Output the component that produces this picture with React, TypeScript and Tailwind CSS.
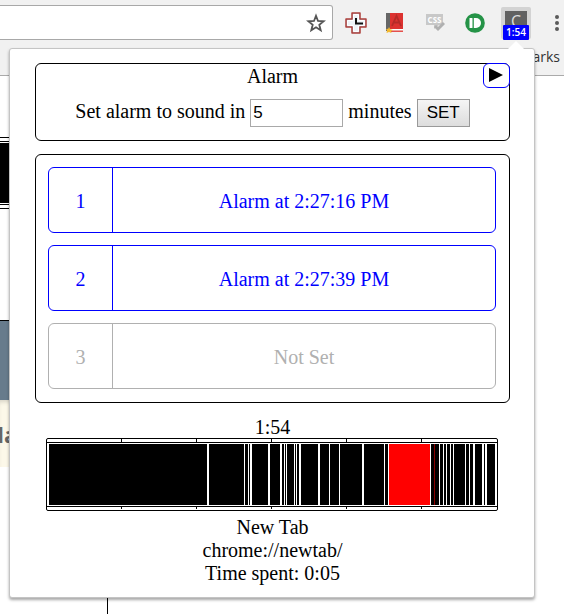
import React from "react";

type Segment = { kind: "black" | "red" | "dark" | "gap"; width: number };

const bars: [number, number, ("red" | "dark")?][] = [
  [49, 207], [209, 244], [245, 248], [249, 250], [252, 268], [270, 280], [282, 284], [285, 286],
  [287, 294], [295, 296], [297, 299], [301, 318], [320, 329], [330, 339], [340, 362], [364, 384],
  [385, 388], [389, 430, "red"], [431, 434], [434, 435, "dark"], [435, 439], [440, 443], [444, 446],
  [447, 450], [451, 453], [454, 465], [466, 469], [470, 473], [475, 482], [484, 485], [487, 495],
];

const segments: Segment[] = [];
let cursor = 47;
for (const [start, end, tone] of bars) {
  if (start > cursor) segments.push({ kind: "gap", width: start - cursor });
  segments.push({ kind: tone ?? "black", width: end - start });
  cursor = end;
}
segments.push({ kind: "gap", width: 497 - cursor });

const fills = { black: "bg-black", red: "bg-[#ff0000]", dark: "bg-[#8b0000]", gap: "bg-white" };

function Ticks({ className }: { className: string }) {
  return (
    <div className={`grid grid-cols-6 ${className}`}>
      {[1, 2, 3, 4, 5].map((n) => (
        <div key={n} className="border-r border-black" />
      ))}
    </div>
  );
}

function Timeline() {
  return (
    <div className="mr-3 ml-[11px] rounded-[2px] border border-black">
      <Ticks className="h-[3px]" />
      <div className="flex h-[65px] border-y border-black py-px">
        {segments.map((s, i) => (
          <div key={i} className={fills[s.kind]} style={{ flex: `${s.width} 1 0` }} />
        ))}
      </div>
      <Ticks className="mb-px h-[2px]" />
    </div>
  );
}

function Slot({ n, label, set }: { n: number; label: string; set: boolean }) {
  return (
    <li
      className={`flex h-[66px] rounded-[6px] border text-center leading-[66px] ${
        set ? "border-[#0000ff] text-[#0000ff]" : "border-[#b0b0b0] text-[#b0b0b0]"
      }`}
    >
      <span className="w-16 border-r border-current">{n}</span>
      <span className="flex-1">{label}</span>
    </li>
  );
}

function Popup() {
  return (
    <main className="absolute top-12 right-[29px] left-[9px] rounded-[3px] border border-[#c4c4c4] bg-white pt-[14px] pr-6 pb-3 pl-[25px] font-['Liberation_Serif',serif] text-[20px] leading-[23px] text-black shadow-[0_2px_3px_rgba(0,0,0,0.35)]">
      <svg className="absolute -top-[8px] right-[9px] h-[9px] w-[18px]" viewBox="0 0 18 9" aria-hidden="true">
        <path d="M0 9 9 0l9 9z" fill="#fff" />
      </svg>
      <section className="relative h-[78px] rounded-[6px] border border-black pt-px text-center">
        <h1>Alarm</h1>
        <button
          aria-label="Play"
          className="absolute -top-px -right-px flex h-[25px] w-[27px] items-center justify-center rounded-[6px] border border-[#0000ff] bg-white pr-px pb-[2px]"
        >
          <svg className="h-[14px] w-[14px]" viewBox="0 0 14 14" aria-hidden="true">
            <path d="M0 0 14 7 0 14z" />
          </svg>
        </button>
        <form className="mt-[11px] flex items-center justify-center gap-[5px]" onSubmit={(e) => e.preventDefault()}>
          <label htmlFor="minutes" className="pb-1">Set alarm to sound in</label>
          <input
            id="minutes"
            defaultValue="5"
            className="h-7 w-[93px] border border-[#a9a9a9] px-[2px] font-['Liberation_Sans',sans-serif] text-[17px]"
          />
          <span className="pb-1">minutes</span>
          <button className="h-7 w-[53px] border border-[#999] bg-linear-to-b from-[#f5f5f5] to-[#dddddd] font-['Liberation_Sans',sans-serif] text-[17px] leading-5">
            SET
          </button>
        </form>
      </section>
      <ul className="mt-[13px] flex flex-col gap-3 rounded-[6px] border border-black pt-3 pr-[13px] pb-[13px] pl-3">
        <Slot n={1} label="Alarm at 2:27:16 PM" set />
        <Slot n={2} label="Alarm at 2:27:39 PM" set />
        <Slot n={3} label="Not Set" set={false} />
      </ul>
      <p className="mt-[13px] -mb-px text-center">1:54</p>
      <Timeline />
      <div className="mt-[5px] text-center">
        <p>New Tab</p>
        <p>chrome://newtab/</p>
        <p>Time spent: 0:05</p>
      </div>
    </main>
  );
}

function Toolbar() {
  return (
    <header className="h-[76px] border-b border-[#aaaaaa] bg-[#f1f1f1] pt-[5px]">
      <div className="flex">
        <div className="flex h-[35px] flex-1 items-center justify-end rounded-r-[3px] border border-l-0 border-[#a8a8a8] bg-white pr-[6px]">
          <button aria-label="Bookmark this page">
            <svg className="h-5 w-5" viewBox="0 0 20 20" fill="none" stroke="#555" strokeWidth="1.8" aria-hidden="true">
              <path d="M10 2.8 12 8l5.6.3-4.3 3.5 1.4 5.4-4.7-3-4.7 3 1.4-5.4L2.4 8.300 8 8z" />
            </svg>
          </button>
        </div>
        <div className="flex w-[231px] items-center">
          <svg className="ml-3 h-[22px] w-[22px]" viewBox="0 0 22 22" aria-hidden="true">
            <path d="M7 1h8v6h6v8h-6v6H7v-6H1V7h6z" fill="#b8cfe0" stroke="#ad3f3a" strokeWidth="1.500" strokeLinejoin="round" />
            <path d="M8.500 2.500h5v6h6v5h-6v6h-5v-6h-6v-5h6z" fill="#eef3f8" stroke="#fff" />
            <path d="M11 6v5.500h7" fill="none" stroke="#111" strokeWidth="2" />
          </svg>
          <svg className="ml-[19px] h-5 w-[18px]" viewBox="0 0 18 20" aria-hidden="true">
            <path d="M0 0h4v18H0z" fill="#666" />
            <path d="M4 0h13v16H4z" fill="#dc3230" />
            <path d="m6 13 4.500-10L15 13M8 9.500h5" fill="none" stroke="#b52b28" strokeWidth="1.800" />
            <path d="M4 16h13v1H4z" fill="#fff" />
            <path d="M4 17.500h13V19H4z" fill="#e5504c" />
            <path d="m3 14 1.200 2.200L7 17l-2 1 .500 2L3 19l-2.500 1 .500-2.500L0 16l2.200-.2z" fill="#f4b92f" />
          </svg>
          <svg className="ml-[21px] h-5 w-5" viewBox="0 0 20 20" aria-hidden="true">
            <path d="M1 1h17v11h-4l-5 4v-4H1z" fill="#c8c8c8" />
            <text x="9.500" y="9.500" textAnchor="middle" fill="#fff" className="font-['Open_Sans',sans-serif] text-[8px] font-bold">CSS</text>
            <path d="m10 13 3 3 6-6" fill="none" stroke="#b0b0b0" strokeWidth="3" />
          </svg>
          <svg className="ml-5 h-5 w-5" viewBox="0 0 20 20" aria-hidden="true">
            <circle cx="10" cy="10" r="9.800" fill="#259347" />
            <rect x="4.500" y="5" width="3" height="10" rx=".6" fill="#fff" />
            <path d="M8.800 5H11a5 5 0 0 1 0 10H8.800z" fill="#fff" />
          </svg>
          <div className="relative mt-px ml-4 h-8 w-[30px] rounded-[2px] bg-[#d3d3d3] px-1 pt-1">
            <div className="h-5 bg-[#616161] pt-px text-center font-['Open_Sans',sans-serif] text-[16px] leading-[18px] text-[#ddd]">C</div>
            <div className="absolute top-[18px] left-[2px] h-[15px] w-[26px] rounded-[1px] bg-[#0000ff] text-center font-['Open_Sans',sans-serif] text-[10px] leading-[15px] font-semibold text-white">
              1:54
            </div>
          </div>
          <button aria-label="Menu" className="mt-px ml-[24px]">
            <svg className="h-5 w-1" viewBox="0 0 4 20" fill="#5a5a5a" aria-hidden="true">
              <circle cx="2" cy="4" r="2" />
              <circle cx="2" cy="10" r="2" />
              <circle cx="2" cy="16" r="2" />
            </svg>
          </button>
        </div>
      </div>
      <div className="mt-2 pr-1 text-right font-['Open_Sans',sans-serif] text-[14px] leading-[18px] text-[#333]">Bookmarks</div>
    </header>
  );
}

export default function App() {
  return (
    <div className="relative min-h-screen overflow-hidden bg-white">
      <Toolbar />
      <div className="mt-[61px] w-9 border-y border-black py-[3px]">
        <div className="border-y border-black py-px">
          <div className="h-[60px] bg-black" />
        </div>
      </div>
      <div className="mt-[111px] w-9 border-t border-black">
        <div className="h-[79px] bg-[#677b8c]" />
        <div className="h-[67px] bg-[#fcf8e9] pt-[19px] font-['Open_Sans',sans-serif] text-[22px] leading-[30px] font-bold text-[#666] shadow-[inset_0_4px_4px_-2px_rgba(0,0,0,0.15)]">
          <span className="-ml-[10px]">da</span>
        </div>
      </div>
      <div className="ml-[107px] h-[147px] w-px bg-black" />
      <Popup />
    </div>
  );
}
